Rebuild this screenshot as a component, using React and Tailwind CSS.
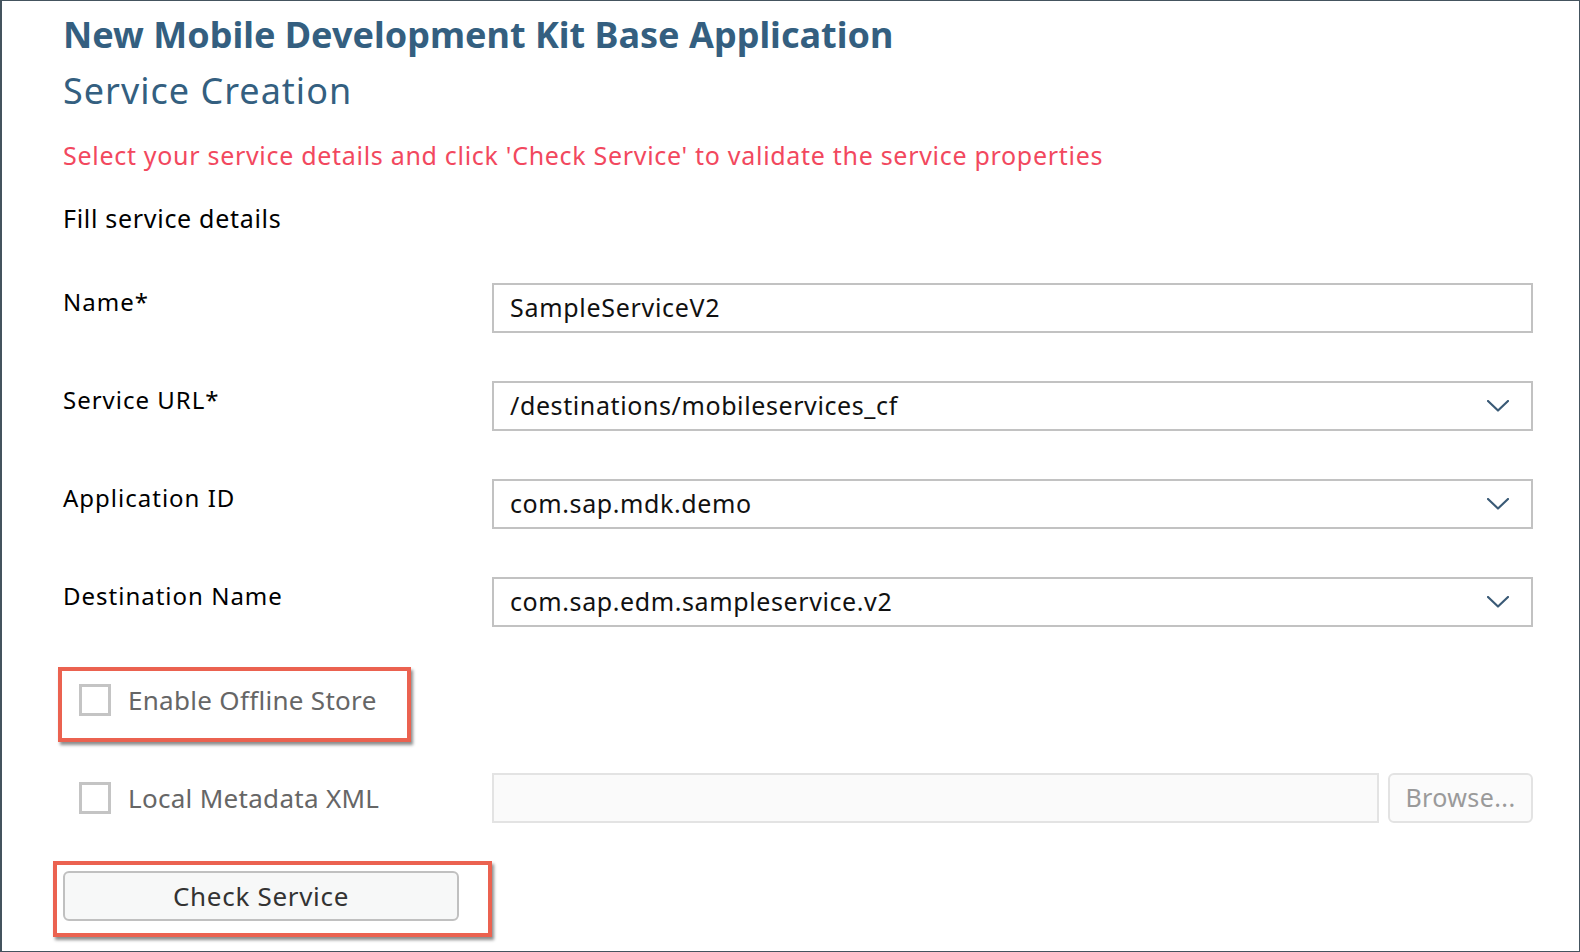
import React from "react";

function Chevron() {
  return (
    <svg width="22" height="12" viewBox="0 0 22 12" fill="none">
      <path d="M1 1 L11 10.5 L21 1" stroke="#3a5a76" strokeWidth="2.2" strokeLinecap="round" strokeLinejoin="round" />
    </svg>
  );
}

function Label({ children }) {
  return <div className="pt-[3px] text-[24px] leading-[32px] tracking-[1px] text-black">{children}</div>;
}

function TextInput({ value }) {
  return (
    <div className="h-[50px] border-2 border-[#c2c2c2] bg-white px-[16px] flex items-center text-[25px] tracking-[0.7px] text-[#111]">
      {value}
    </div>
  );
}

function Select({ value }) {
  return (
    <div className="h-[50px] border-2 border-[#c2c2c2] bg-white pl-[16px] pr-[22px] flex items-center justify-between text-[25px] tracking-[0.6px] text-[#111]">
      <span>{value}</span>
      <Chevron />
    </div>
  );
}

function Checkbox({ label }) {
  return (
    <div className="h-[50px] flex items-center pl-[16px]">
      <div className="w-[32px] h-[32px] border-[3px] border-[#c4c4c4] bg-white" />
      <span className="ml-[17px] text-[26px] tracking-[0.3px] text-[#666666]">{label}</span>
    </div>
  );
}

export default function App() {
  return (
    <div className="w-[1580px] h-[952px] box-border border border-l-2 border-[#44535e] bg-white pl-[61px] pr-[46px] pt-[14px] font-['Noto_Sans',sans-serif] overflow-hidden">
      <h1 className="text-[36px] leading-[40px] font-bold text-[#345f80]">New Mobile Development Kit Base Application</h1>
      <h2 className="mt-[16px] text-[36px] leading-[40px] tracking-[1px] text-[#345f80]">Service Creation</h2>
      <p className="mt-[28px] text-[25px] leading-[32px] tracking-[0.7px] text-[#f2485e]">
        Select your service details and click 'Check Service' to validate the service properties
      </p>
      <p className="mt-[31px] text-[25px] leading-[32px] tracking-[0.7px] text-black">Fill service details</p>

      <div className="mt-[49px] grid grid-cols-[429px_1fr] gap-y-[48px]">
        <Label>Name*</Label>
        <TextInput value="SampleServiceV2" />

        <Label>Service URL*</Label>
        <Select value="/destinations/mobileservices_cf" />

        <Label>Application ID</Label>
        <Select value="com.sap.mdk.demo" />

        <Label>Destination Name</Label>
        <Select value="com.sap.edm.sampleservice.v2" />

        <div className="relative col-span-2">
          <Checkbox label="Enable Offline Store" />
          <div className="absolute left-[-5px] top-[-8px] w-[353px] h-[75px] border-[4px] border-[#eb6250] shadow-[2px_3px_3px_rgba(0,0,0,0.45)] pointer-events-none" />
        </div>

        <Checkbox label="Local Metadata XML" />
        <div className="flex gap-[9px]">
          <div className="flex-1 h-[50px] border-2 border-[#e3e3e3] bg-[#fafafa]" />
          <div className="w-[145px] h-[50px] border-2 border-[#e3e3e3] rounded-[6px] bg-[#fbfbfb] flex items-center justify-center text-[25px] tracking-[0.4px] text-[#9a9a9a]">
            Browse...
          </div>
        </div>

        <div className="relative col-span-2">
          <div className="w-[396px] h-[50px] border-2 border-[#c0c0c0] rounded-[6px] bg-[#f7f8f8] flex items-center justify-center text-[26px] tracking-[0.7px] text-[#333333]">
            Check Service
          </div>
          <div className="absolute left-[-10px] top-[-10px] w-[439px] h-[76px] border-[4px] border-[#eb6250] shadow-[2px_3px_3px_rgba(0,0,0,0.45)] pointer-events-none" />
        </div>
      </div>
    </div>
  );
}
